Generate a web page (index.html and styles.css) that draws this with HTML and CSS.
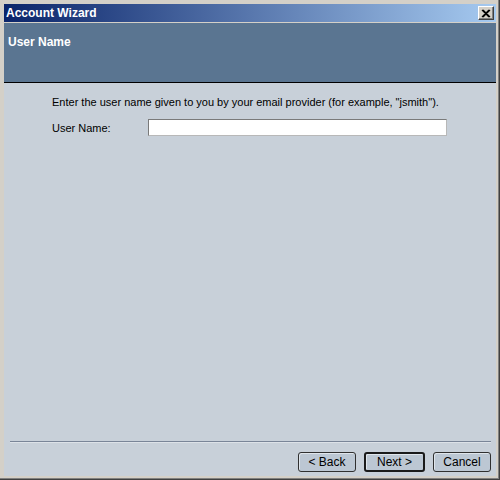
FILE: index.html
```html
<!DOCTYPE html>
<html>
<head>
<meta charset="utf-8">
<link rel="stylesheet" href="styles.css">
</head>
<body>
<div class="window">
  <div class="titlebar">
    <span class="title">Account Wizard</span>
    <span class="close"><svg width="10" height="9" viewBox="0 0 10 9"><path d="M1 1 L8 8 M2 1 L9 8 M8 1 L1 8 M9 1 L2 8" stroke="#000" stroke-width="1.2" fill="none"/></svg></span>
  </div>
  <div class="header">
    <span class="header-title">User Name</span>
  </div>
  <div class="content">
    <div class="page">
      <p class="intro">Enter the user name given to you by your email provider (for example, "jsmith").</p>
      <div class="field">
        <label class="label">User Name:</label>
        <div class="input"></div>
      </div>
    </div>
    <div class="separator"></div>
    <div class="buttons">
      <button class="btn">&lt; Back</button>
      <button class="btn default">Next &gt;</button>
      <button class="btn">Cancel</button>
    </div>
  </div>
</div>
</body>
</html>
```
FILE: styles.css
```css
html, body {
  margin: 0;
  padding: 0;
}
body {
  width: 500px;
  height: 480px;
  overflow: hidden;
  font-family: Tahoma, "Liberation Sans", Arial, sans-serif;
  font-size: 11px;
}
.window {
  box-sizing: border-box;
  width: 500px;
  height: 480px;
  background: #d4d0c8;
  border-right: 1px solid #404040;
  border-bottom: 1px solid #404040;
  box-shadow: inset -1px -1px 0 #808080;
  padding: 4px 3px 3px 4px;
  display: flex;
  flex-direction: column;
}
.titlebar {
  height: 18px;
  background: linear-gradient(to right, #0a246a, #a6caf0);
  display: flex;
  align-items: center;
  justify-content: space-between;
  padding: 0 2px 0 2px;
}
.title {
  color: #fff;
  font-weight: bold;
  font-size: 12px;
}
.close {
  box-sizing: border-box;
  width: 16px;
  height: 14px;
  background: #d4d0c8;
  border-top: 1px solid #fff;
  border-left: 1px solid #fff;
  border-right: 1px solid #404040;
  border-bottom: 1px solid #404040;
  box-shadow: inset -1px -1px 0 #808080;
  display: flex;
  align-items: center;
  justify-content: center;
}
.header {
  margin-top: 1px;
  height: 59px;
  background: #5a7591;
  border-bottom: 1px solid #000;
  padding: 0 0 0 4px;
}
.header-title {
  display: block;
  margin-top: 12px;
  color: #fff;
  font-weight: bold;
  font-size: 12px;
}
.content {
  flex: 1;
  background: #c8d0d9;
  display: flex;
  flex-direction: column;
}
.page {
  flex: 1;
  padding: 12px 0 0 48px;
  color: #000;
}
.intro {
  margin: 0;
  line-height: 14px;
  white-space: nowrap;
}
.field {
  display: flex;
  align-items: center;
  margin-top: 10px;
}
.label {
  width: 96px;
}
.input {
  box-sizing: border-box;
  width: 299px;
  height: 17px;
  background: #fff;
  border-top: 1px solid #7a7a7a;
  border-left: 1px solid #7a7a7a;
  border-right: 1px solid #b8b8b8;
  border-bottom: 1px solid #b8b8b8;
}
.separator {
  margin: 0 5px 0 6px;
  height: 1px;
  background: #7a8598;
  border-bottom: 1px solid #dde2e8;
}
.buttons {
  display: flex;
  justify-content: flex-end;
  gap: 8px;
  padding: 9px 5px 4px 0;
}
.btn {
  box-sizing: border-box;
  height: 20px;
  width: 58px;
  font-family: inherit;
  font-size: 12px;
  color: #000;
  background: #bcc7d3;
  border: 1px solid #303030;
  border-radius: 3px;
  padding: 0;
  box-shadow: inset 1px 1px 0 #dfe5eb;
}
.btn.default {
  width: 61px;
  border: 2px solid #1a1a1a;
}
```
